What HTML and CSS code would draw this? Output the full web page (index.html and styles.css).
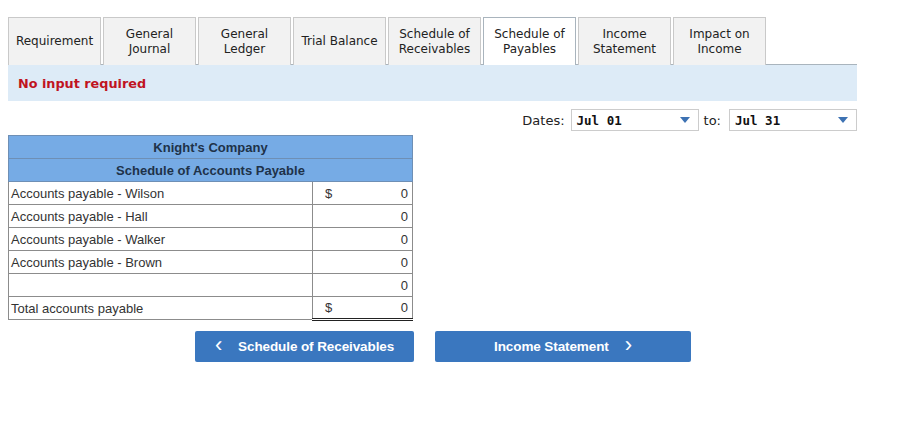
FILE: index.html
```html
<!DOCTYPE html>
<html>
<head>
<meta charset="utf-8">
<link rel="stylesheet" href="styles.css">
</head>
<body>
<div class="page">
  <div class="tabs">
    <div class="tab">Requirement</div>
    <div class="tab">General<br>Journal</div>
    <div class="tab">General<br>Ledger</div>
    <div class="tab">Trial Balance</div>
    <div class="tab">Schedule of<br>Receivables</div>
    <div class="tab active">Schedule of<br>Payables</div>
    <div class="tab">Income<br>Statement</div>
    <div class="tab">Impact on<br>Income</div>
  </div>
  <div class="notice">No input required</div>
  <div class="dates">
    <span class="lbl">Dates:</span>
    <div class="select"><span class="val">Jul 01</span><span class="arrow"></span></div>
    <span class="lbl to">to:</span>
    <div class="select"><span class="val">Jul 31</span><span class="arrow"></span></div>
  </div>
  <table class="sched">
    <tr class="head"><td colspan="2">Knight's Company</td></tr>
    <tr class="head"><td colspan="2">Schedule of Accounts Payable</td></tr>
    <tr><td class="name">Accounts payable - Wilson</td><td class="amt"><span class="dol">$</span><span>0</span></td></tr>
    <tr><td class="name">Accounts payable - Hall</td><td class="amt"><span></span><span>0</span></td></tr>
    <tr><td class="name">Accounts payable - Walker</td><td class="amt"><span></span><span>0</span></td></tr>
    <tr><td class="name">Accounts payable - Brown</td><td class="amt"><span></span><span>0</span></td></tr>
    <tr><td class="name"></td><td class="amt"><span></span><span>0</span></td></tr>
    <tr class="total"><td class="name">Total accounts payable</td><td class="amt"><span class="dol">$</span><span>0</span></td></tr>
  </table>
  <div class="nav">
    <button class="btn prev"><span class="chev">&lsaquo;</span>Schedule of Receivables</button>
    <button class="btn next">Income Statement<span class="chev">&rsaquo;</span></button>
  </div>
</div>
</body>
</html>
```
FILE: styles.css
```css
* { box-sizing: border-box; }
body { margin: 0; background: #fff; }
.page { padding: 17px 40px 0 8px; width: 897px; }
.tabs {
  display: flex;
  gap: 2px;
  border-bottom: 1px solid #a9b4bd;
  width: 849px;
}
.tab {
  width: 93px;
  height: 48px;
  border: 1px solid #c9c9c9;
  border-bottom: none;
  background: #f2f2f2;
  font-family: "DejaVu Sans", Verdana, sans-serif;
  font-size: 12px;
  line-height: 15px;
  color: #222;
  display: flex;
  align-items: center;
  justify-content: center;
  text-align: center;
  margin-bottom: -1px;
}
.tab.active {
  background: #fff;
  border-color: #a9b4bd;
  position: relative;
  z-index: 1;
}
.notice {
  width: 849px;
  height: 36px;
  background: #ddebf7;
  font-family: "DejaVu Sans", Verdana, sans-serif;
  font-weight: bold;
  font-size: 12.8px;
  color: #c0141f;
  display: flex;
  align-items: center;
  padding-left: 10px;
}
.dates {
  width: 849px;
  display: flex;
  justify-content: flex-end;
  align-items: center;
  margin-top: 8px;
  font-family: "DejaVu Sans", Verdana, sans-serif;
  font-size: 13px;
  color: #222;
}
.lbl { margin-right: 6px; }
.lbl.to { margin-left: 5px; margin-right: 8px; }
.select {
  width: 128px;
  height: 22px;
  border: 1px solid #ccc;
  display: flex;
  align-items: center;
  justify-content: space-between;
  padding: 0 8px 0 5px;
  background: #fff;
}
.select .val {
  font-family: "DejaVu Sans Mono", "Liberation Mono", monospace;
  font-weight: bold;
  font-size: 12.5px;
  color: #111;
}
.arrow {
  width: 0; height: 0;
  border-left: 5px solid transparent;
  border-right: 5px solid transparent;
  border-top: 6px solid #3d72b3;
}
.sched {
  border-collapse: collapse;
  margin-top: 4px;
  width: 405px;
  font-family: "Liberation Sans", Arial, sans-serif;
  font-size: 13px;
  color: #333;
}
.sched td {
  border: 1px solid #8c8c8c;
  height: 23px;
  padding: 0 2px;
}
.sched .head td {
  background: #76abe5;
  color: #1e3249;
  font-weight: bold;
  text-align: center;
  border-color: #6e8fb5;
}
.sched .name { width: 304px; }
.sched .amt { padding: 0 4px 0 10px; }
.amt span { display: inline-block; }
.amt span:last-child { float: right; }
.dol { padding-left: 2px; }
.sched .total .amt {
  border-top: 1px solid #222;
  border-bottom: 3px double #222;
}
.nav {
  display: flex;
  gap: 21px;
  margin-top: 10px;
  margin-left: 187px;
}
.btn {
  height: 31px;
  border: none;
  border-radius: 2px;
  background: #3a77bf;
  color: #fff;
  font-family: "Liberation Sans", Arial, sans-serif;
  font-weight: bold;
  font-size: 13.5px;
  letter-spacing: -0.1px;
  display: flex;
  align-items: center;
  justify-content: center;
  padding: 0;
}
.btn.prev { width: 219px; }
.btn.next { width: 256px; }
.chev { font-size: 22px; font-weight: normal; line-height: 1; margin-top: -4px; }
.prev .chev { margin-right: 16px; }
.next .chev { margin-left: 16px; }
```
